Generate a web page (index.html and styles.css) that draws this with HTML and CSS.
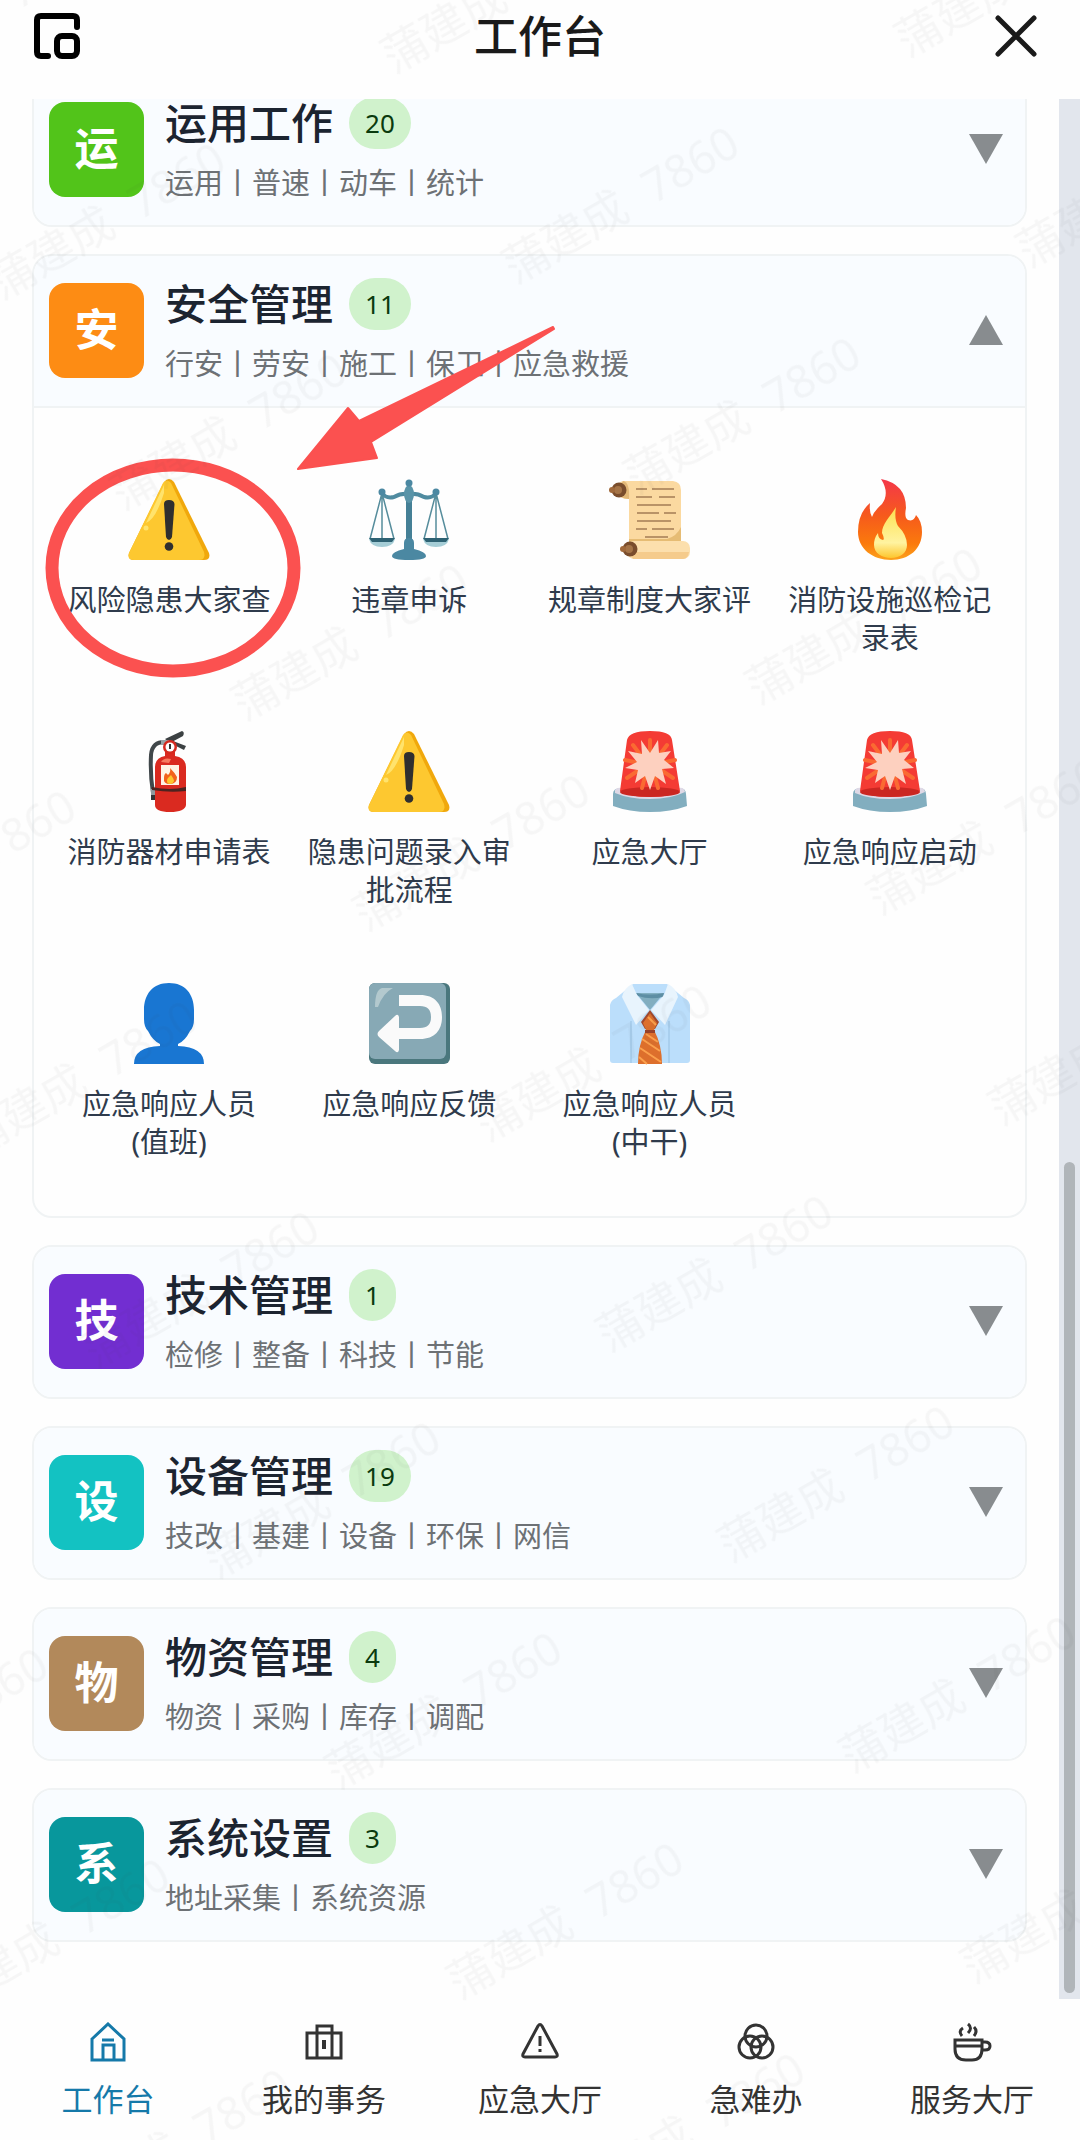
FILE: index.html
```html
<!DOCTYPE html>
<html lang="zh-CN">
<head>
    <meta charset="UTF-8">
    <meta name="viewport" content="width=device-width, initial-scale=1.0">
    <title>工作台</title>
    <link rel="stylesheet" href="styles.css">
</head>
<body>
    <!-- 共用图标 -->
    <svg class="defs" width="0" height="0" aria-hidden="true">
        <defs>
            <linearGradient id="fire-outer" x1="0" y1="0" x2="0" y2="1">
                <stop offset="0" stop-color="#f4374a"/>
                <stop offset="0.45" stop-color="#f65a1c"/>
                <stop offset="0.8" stop-color="#fb7a0c"/>
                <stop offset="1" stop-color="#fca21c"/>
            </linearGradient>
            <linearGradient id="fire-inner" x1="0" y1="0" x2="0" y2="1">
                <stop offset="0" stop-color="#fde04e"/>
                <stop offset="0.7" stop-color="#fff3a0"/>
                <stop offset="1" stop-color="#fdc62e"/>
            </linearGradient>
            <symbol id="warning" viewBox="0 0 82 82">
                <path d="M36 3Q41-3 46 3L81 74Q83 81 76 81H6Q-1 81 1 74Z" fill="#f0a80c"/>
                <path d="M35 4Q39-1 43 4L76 73Q78 81 71 81H6Q-1 81 1 74Z" fill="#fdc830"/>
                <path d="M36 6L18 44Q28 40 36 14Z" fill="#ffe36c"/>
                <circle cx="18" cy="49" r="2.500" fill="#ffe36c"/>
                <path d="M36 25Q36 21 41 21T46.500 25L44 58Q43 61 41 61T38 58Z" fill="#2f2f2f"/>
                <circle cx="41" cy="67.500" r="4.300" fill="#2f2f2f"/>
            </symbol>
            <symbol id="siren" viewBox="0 0 82 82">
                <path d="M4 63Q4 57 12 57H70Q77 57 77 63L78 75Q62 81 41 81T4 75Z" fill="#82aebf"/>
                <path d="M6 59Q8 56 12 57H70Q75 56 76 61Q62 68 41 68T6 62Z" fill="#dfd9e6"/>
                <path d="M18 9Q20 0 41 0T63 9L71 60Q62 66 41 66T11 60Z" fill="#f43b34"/>
                <ellipse cx="41" cy="61" rx="30" ry="5" fill="#cb2722"/>
                <path d="M41 9V24M24 14L33 26M58 14L49 26M16 29L30 32M66 29L52 32M18 47L30 39M64 47L52 39M33 57L37 42M49 57L45 42" stroke="#fa6a32" stroke-width="4" stroke-linecap="round"/>
                <path d="M32 9L41 22L49 9L50 22L62 20L55 29L65 37L53 38L57 53L46 45L41 59L36 45L26 52L29 39L16 37L28 31L19 20L33 23Z" fill="#fdd0bf"/>
            </symbol>
        </defs>
    </svg>

    <div class="page">
        <header class="topbar">
            <button class="icon-btn" aria-label="小窗">
                <svg width="48" height="48" viewBox="0 0 48 48" fill="none" stroke="#000" stroke-width="6" stroke-linecap="round">
                    <path d="M44 15V8Q44 4 40 4H8Q4 4 4 8V40Q4 44 8 44H15"/>
                    <rect x="24" y="24" width="20" height="20" rx="5"/>
                </svg>
            </button>
            <h1>工作台</h1>
            <button class="icon-btn close" aria-label="关闭">
                <svg width="48" height="48" viewBox="0 0 48 48" stroke="#1a1a1a" stroke-width="5" stroke-linecap="round">
                    <path d="M6 6L42 42M42 6L6 42"/>
                </svg>
            </button>
        </header>

        <div class="body">
            <main class="list">
                <section class="card">
                    <button class="card-head">
                        <span class="tile green">运</span>
                        <span class="info">
                            <span class="title">运用工作<span class="badge">20</span></span>
                            <span class="sub">运用丨普速丨动车丨统计</span>
                        </span>
                        <svg class="arrow" viewBox="0 0 34 30"><path d="M0 0H34L17 30Z"/></svg>
                    </button>
                </section>

                <section class="card open">
                    <button class="card-head" aria-expanded="true">
                        <span class="tile orange">安</span>
                        <span class="info">
                            <span class="title">安全管理<span class="badge">11</span></span>
                            <span class="sub">行安丨劳安丨施工丨保卫丨应急救援</span>
                        </span>
                        <svg class="arrow" viewBox="0 0 34 30"><path d="M0 30H34L17 0Z"/></svg>
                    </button>
                    <div class="apps">
                        <a class="app" href="#">
                            <svg class="emoji"><use href="#warning"/></svg>
                            <span>风险隐患大家查</span>
                        </a>
                        <a class="app" href="#">
                            <svg class="emoji" viewBox="0 0 82 82">
                                <g fill="none" stroke="#568d9c" stroke-width="1.500">
                                    <path d="M14 14L2 60M14 14V60M14 14L26 60M68 14L56 60M68 14V60M68 14L80 60"/>
                                </g>
                                <path d="M1 60H27Q25 68 14 68T1 60ZM55 60H81Q79 68 68 68T55 60Z" fill="#a5cdd6"/>
                                <path d="M1 59H27L24 63H4ZM55 59H81L78 63H58Z" fill="#2e6273"/>
                                <path d="M14 14Q18 20 26 18Q33 14 41 15Q49 14 56 18Q64 20 68 14" fill="none" stroke="#4f8ba0" stroke-width="4"/>
                                <path d="M38 18H44V62H38Z" fill="#458096"/>
                                <path d="M36 64Q36 59 41 59T46 64V70Q58 73 58 77Q58 81 41 81T24 77Q24 73 36 70Z" fill="#4b88a2"/>
                                <ellipse cx="41" cy="15" rx="5" ry="9" fill="#5994a8"/>
                                <circle cx="41" cy="4" r="3.500" fill="#4b88a2"/>
                                <circle cx="14" cy="13" r="3.500" fill="#4b88a2"/>
                                <circle cx="68" cy="13" r="3.500" fill="#4b88a2"/>
                            </svg>
                            <span>违章申诉</span>
                        </a>
                        <a class="app" href="#">
                            <svg class="emoji" viewBox="0 0 82 82">
                                <path d="M14 2H64Q72 3 72 11V64H20V20Q8 20 8 11Q8 3 14 2Z" fill="#fbd9a0"/>
                                <path d="M72 48Q68 57 58 60H20V66H72Z" fill="#e6bc74"/>
                                <path d="M14 2Q21 3 20 20Q10 20 9 11Z" fill="#e3b877"/>
                                <rect x="18" y="62" width="63" height="18" rx="7" fill="#fcdfad"/>
                                <path d="M20 73H80Q79 80 74 80H24Z" fill="#f5cb8c"/>
                                <circle cx="10" cy="11" r="7.500" fill="#7a4d2c"/>
                                <circle cx="9" cy="11" r="4" fill="#a57447"/>
                                <circle cx="3" cy="11" r="3" fill="#a0693b"/>
                                <circle cx="21" cy="70" r="7.500" fill="#7a4d2c"/>
                                <circle cx="20" cy="70" r="4" fill="#a57447"/>
                                <circle cx="14" cy="70" r="3" fill="#a0693b"/>
                                <path d="M27 10H38M43 10H65M27 18H43M50 18H66M28 26H62M28 34H50M55 34H67M28 42H62M27 50H38M43 50H65M36 58H59" stroke="#b99367" stroke-width="1.800"/>
                            </svg>
                            <span>规章制度大家评</span>
                        </a>
                        <a class="app" href="#">
                            <svg class="emoji" viewBox="0 0 82 82">
                                <path d="M32 0Q57 5 57 29Q55 39 59 41Q65 43 67 36Q73 42 73 53C73 70 60 81 42 81S9 70 9 53Q9 34 21 24Q20 33 23 38Q25 32 33 25Q41 14 32 0Z" fill="url(#fire-outer)"/>
                                <path d="M47 28Q45 40 49 47Q58 56 58 66C58 74 51 79 42 79S25 74 25 66Q25 59 29 54Q29 60 34 61Q36 60 33 54C33 45 41 38 47 28Z" fill="url(#fire-inner)"/>
                            </svg>
                            <span>消防设施巡检记录表</span>
                        </a>
                        <a class="app" href="#">
                            <svg class="emoji" viewBox="0 0 82 82">
                                <path d="M38 11Q24 10 23 24Q22 44 25 62" fill="none" stroke="#40474a" stroke-width="4"/>
                                <path d="M23 58H28V66H23Z" fill="#8e9a9e"/>
                                <path d="M23 64H28V69H23Z" fill="#303436"/>
                                <path d="M37 8L54 0Q57 1 55 5L42 12ZM45 10L58 15L56 19L44 13Z" fill="#3c4143"/>
                                <path d="M33 9H41V14H33Z" fill="#98a3a6"/>
                                <path d="M37 18H47V25Q58 27 58 36V74Q57 81 42 81T27 74V36Q27 27 37 25Z" fill="#da2a20"/>
                                <path d="M33 31Q36 26 43 28L41 32Z" fill="#f77a5f"/>
                                <circle cx="42" cy="16" r="7" fill="#d5291f"/>
                                <circle cx="42" cy="16" r="4.500" fill="#fff"/>
                                <path d="M42 13V18" stroke="#333" stroke-width="2"/>
                                <rect x="33" y="34" width="18" height="20" fill="#fff3e4"/>
                                <path d="M42 37Q47 42 49 46Q49 53 42 53T36 47Q36 43 38 42L40 44Q43 41 42 37Z" fill="#f2621a"/>
                                <path d="M43 44Q46 48 46 50Q45 53 42 53T39 50Q39 48 40 47Z" fill="#fdc62e"/>
                                <path d="M24 56Q42 60 58 56V60Q42 62 24 59Z" fill="#4c2320"/>
                            </svg>
                            <span>消防器材申请表</span>
                        </a>
                        <a class="app" href="#">
                            <svg class="emoji"><use href="#warning"/></svg>
                            <span>隐患问题录入审批流程</span>
                        </a>
                        <a class="app" href="#">
                            <svg class="emoji"><use href="#siren"/></svg>
                            <span>应急大厅</span>
                        </a>
                        <a class="app" href="#">
                            <svg class="emoji"><use href="#siren"/></svg>
                            <span>应急响应启动</span>
                        </a>
                        <a class="app" href="#">
                            <svg class="emoji" viewBox="0 0 82 82">
                                <path d="M41 0C57 0 66 11 66 27V36Q66 44 62 48Q57 58 50 61V63Q76 64 76 81H6Q6 64 32 63V61Q25 58 20 48Q16 44 16 36V27C16 11 25 0 41 0Z" fill="#1976d2"/>
                            </svg>
                            <span>应急响应人员(值班)</span>
                        </a>
                        <a class="app" href="#">
                            <svg class="emoji" viewBox="0 0 82 82">
                                <rect x="1" y="0" width="81" height="81" rx="6" fill="#4a777d"/>
                                <rect x="1" y="0" width="77" height="76" rx="6" fill="#87a9b5"/>
                                <path d="M7 24Q7 7 14 5H25Q15 10 10 24Z" fill="#b3c9ce"/>
                                <path d="M31 12H52C67 12 74 21 74 34S67 56 52 56H31V67Q30 71 27 68L11 54Q8 51 11 48L27 33Q30 30 31 34V45H52Q63 45 63 34T52 23H31Z" fill="#fafafa"/>
                            </svg>
                            <span>应急响应反馈</span>
                        </a>
                        <a class="app" href="#">
                            <svg class="emoji" viewBox="0 0 82 82">
                                <path d="M1 22Q2 17 7 15L24 1H58L75 15Q80 17 81 22V77Q81 80 78 80H4Q1 80 1 77Z" fill="#bbdefb"/>
                                <path d="M22 38V80M60 38V80" stroke="#a9cfee" stroke-width="2"/>
                                <path d="M27 10H55L41 27Z" fill="#82aec0"/>
                                <path d="M27 10Q41 13 55 10L54 14Q41 17 29 13Z" fill="#5d8ea4"/>
                                <path d="M23 1L28 12L40 27L27 42L13 14Q15 5 23 1ZM59 1L55 12L42 27L56 42L69 14Q67 5 59 1Z" fill="#e8f4fd"/>
                                <path d="M41 27L50 39L46 46H36L32 39Z" fill="#a2492d"/>
                                <path d="M41 30L48 40L45 47Q53 62 53 81H29Q29 62 37 47L34 40Z" fill="#dd6f2c"/>
                                <path d="M36 47H46V50H36Z" fill="#9a4228"/>
                                <path d="M39 34L47 42M33 56L51 68M31 65L52 79M30 74L38 81M37 51L49 59" stroke="#fba04c" stroke-width="2"/>
                            </svg>
                            <span>应急响应人员(中干)</span>
                        </a>
                    </div>
                </section>

                <section class="card">
                    <button class="card-head">
                        <span class="tile purple">技</span>
                        <span class="info">
                            <span class="title">技术管理<span class="badge">1</span></span>
                            <span class="sub">检修丨整备丨科技丨节能</span>
                        </span>
                        <svg class="arrow" viewBox="0 0 34 30"><path d="M0 0H34L17 30Z"/></svg>
                    </button>
                </section>

                <section class="card">
                    <button class="card-head">
                        <span class="tile cyan">设</span>
                        <span class="info">
                            <span class="title">设备管理<span class="badge">19</span></span>
                            <span class="sub">技改丨基建丨设备丨环保丨网信</span>
                        </span>
                        <svg class="arrow" viewBox="0 0 34 30"><path d="M0 0H34L17 30Z"/></svg>
                    </button>
                </section>

                <section class="card">
                    <button class="card-head">
                        <span class="tile brown">物</span>
                        <span class="info">
                            <span class="title">物资管理<span class="badge">4</span></span>
                            <span class="sub">物资丨采购丨库存丨调配</span>
                        </span>
                        <svg class="arrow" viewBox="0 0 34 30"><path d="M0 0H34L17 30Z"/></svg>
                    </button>
                </section>

                <section class="card">
                    <button class="card-head">
                        <span class="tile teal">系</span>
                        <span class="info">
                            <span class="title">系统设置<span class="badge">3</span></span>
                            <span class="sub">地址采集丨系统资源</span>
                        </span>
                        <svg class="arrow" viewBox="0 0 34 30"><path d="M0 0H34L17 30Z"/></svg>
                    </button>
                </section>
            </main>
            <div class="scrollbar"><div class="thumb"></div></div>
        </div>

        <nav class="tabbar">
            <a class="tab active" href="#">
                <svg width="40" height="40" viewBox="0 0 40 40">
                    <path d="M4 17L20 2L36 17V38H4ZM15 38V23H26V38M14 18H26"/>
                </svg>
                <span>工作台</span>
            </a>
            <a class="tab" href="#">
                <svg width="40" height="40" viewBox="0 0 40 40">
                    <path d="M3 11H37V36H3ZM13 36V4H28V36"/>
                    <path d="M20 18V27" stroke-width="4"/>
                </svg>
                <span>我的事务</span>
            </a>
            <a class="tab" href="#">
                <svg width="40" height="40" viewBox="0 0 40 40" stroke-linejoin="round">
                    <path d="M18 4Q20 1 22 4L37 32Q38 35 35 35H5Q2 35 3 32ZM20 14V24M20 27V30"/>
                </svg>
                <span>应急大厅</span>
            </a>
            <a class="tab" href="#">
                <svg width="40" height="40" viewBox="0 0 40 40">
                    <circle cx="20" cy="14" r="11"/>
                    <circle cx="14" cy="25" r="11"/>
                    <circle cx="26" cy="25" r="11"/>
                </svg>
                <span>急难办</span>
            </a>
            <a class="tab" href="#">
                <svg width="40" height="40" viewBox="0 0 40 40">
                    <path d="M3 18H30V27Q30 38 20 38H14Q3 38 3 27ZM3 24H30M30 20H33Q38 20 38 24T33 28H29M11 6Q6 9 10 14M16 2Q21 6 16 11M22 5Q26 9 22 14"/>
                </svg>
                <span>服务大厅</span>
            </a>
        </nav>

        <!-- 红色标注 -->
        <svg class="mark" width="520" height="360" viewBox="40 320 520 360">
            <ellipse cx="173" cy="568" rx="121" ry="103" fill="none" stroke="#fb5150" stroke-width="13"/>
            <path d="M298 469L348 408L359 421L553 327L554 329L371 442L377 458Z" fill="#fb5150" stroke="#fb5150" stroke-width="2" stroke-linejoin="round"/>
        </svg>
    </div>

    <!-- 水印 -->
    <svg class="watermark" aria-hidden="true">
        <defs>
            <pattern id="wm" width="453" height="243" patternUnits="userSpaceOnUse" patternTransform="rotate(-30) translate(280 364)">
                <text x="24" y="140">蒲建成</text>
                <text x="184" y="140">7860</text>
            </pattern>
        </defs>
        <rect width="100%" height="100%" fill="url(#wm)"/>
    </svg>
</body>
</html>
```
FILE: styles.css
```css
* {
    box-sizing: border-box;
}
body {
    margin: 0;
    background-color: #fefefe;
    color: #1c2430;
    font-family: "Noto Sans", "Noto Sans CJK SC", sans-serif;
}
button {
    border: none;
    background: none;
    padding: 0;
    font: inherit;
    color: inherit;
    cursor: pointer;
}
a {
    color: inherit;
    text-decoration: none;
}
.defs {
    position: absolute;
}
.page {
    position: relative;
    display: flex;
    flex-direction: column;
    min-height: 100vh;
}

/* 顶部标题栏 */
.topbar {
    position: relative;
    z-index: 1;
    display: grid;
    grid-template-columns: 1fr auto 1fr;
    align-items: start;
    height: 99px;
    padding: 12px 33px 0;
    background-color: #fefefe;
}
.topbar h1 {
    margin: 0;
    font-size: 44px;
    font-weight: 500;
    line-height: 48px;
    color: #1a1a1a;
}
.icon-btn {
    justify-self: start;
}
.icon-btn.close {
    justify-self: end;
    margin-right: 7px;
}
.icon-btn svg {
    display: block;
}

/* 列表已向上滚动一段 */
.body {
    flex: 1;
    display: flex;
    overflow: hidden;
}
.list {
    flex: 1;
    display: flex;
    flex-direction: column;
    gap: 27px;
    margin-top: -26px;
    padding: 0 32px;
}
.scrollbar {
    display: flex;
    flex-direction: column;
    justify-content: flex-end;
    width: 21px;
    padding: 6px 5px;
    background-color: #e2e6ed;
}
.thumb {
    height: 44%;
    border-radius: 6px;
    background-color: #b0b5b9;
}

.card {
    border: 2px solid #f0f3f4;
    border-radius: 20px;
    background-color: #fefefe;
    overflow: hidden;
}
.card-head {
    display: flex;
    align-items: center;
    width: 100%;
    height: 150px;
    padding: 0 22px 2px 15px;
    background-color: #f9fcff;
    text-align: left;
}
.open .card-head {
    height: 152px;
    border-bottom: 2px solid #f0f3f4;
}
.tile {
    display: flex;
    justify-content: center;
    align-items: center;
    width: 95px;
    height: 95px;
    margin-right: 21px;
    padding-bottom: 2px;
    border-radius: 16px;
    color: #ffffff;
    font-size: 44px;
    font-weight: 600;
    line-height: 44px;
}
.green { background-color: #52c41a; }
.orange { background-color: #fd8c14; }
.purple { background-color: #722ed1; }
.cyan { background-color: #13c2c2; }
.brown { background-color: #b2895b; }
.teal { background-color: #08979c; }
.info {
    flex: 1;
    display: flex;
    flex-direction: column;
    gap: 15px;
}
.title {
    display: flex;
    align-items: center;
    gap: 16px;
    height: 52px;
    font-size: 42px;
    font-weight: 500;
    line-height: 42px;
}
.badge {
    padding: 0 16px;
    border-radius: 26px;
    background-color: #d0f2cc;
    color: #0a3a0e;
    font-size: 26px;
    font-weight: 400;
    line-height: 52px;
}
.sub {
    font-size: 29px;
    line-height: 38px;
    color: #6d7175;
}
.arrow {
    width: 34px;
    height: 30px;
    fill: #888c8f;
}

/* 应用宫格 */
.apps {
    display: grid;
    grid-template-columns: repeat(4, 1fr);
    padding: 35px 15px 17px;
}
.app {
    display: flex;
    flex-direction: column;
    align-items: center;
    gap: 20px;
    min-height: 252px;
    padding: 36px 16px;
    font-size: 29px;
    line-height: 38px;
    color: #2f3b4c;
    text-align: center;
}
.emoji {
    width: 82px;
    height: 82px;
}

/* 底部导航 */
.tabbar {
    display: flex;
    height: 141px;
    padding-top: 23px;
}
.tab {
    flex: 1;
    display: flex;
    flex-direction: column;
    align-items: center;
    gap: 15px;
    font-size: 31px;
    line-height: 44px;
    color: #333333;
}
.tab svg {
    fill: none;
    stroke: currentColor;
    stroke-width: 3;
}
.tab.active {
    color: #1579a9;
}

.mark {
    position: absolute;
    top: 320px;
    left: 40px;
    pointer-events: none;
}
.watermark {
    position: absolute;
    z-index: 2;
    top: 0;
    left: 0;
    width: 100%;
    height: 100%;
    font-size: 45px;
    fill: rgba(60, 50, 60, 0.04);
    pointer-events: none;
}
```
